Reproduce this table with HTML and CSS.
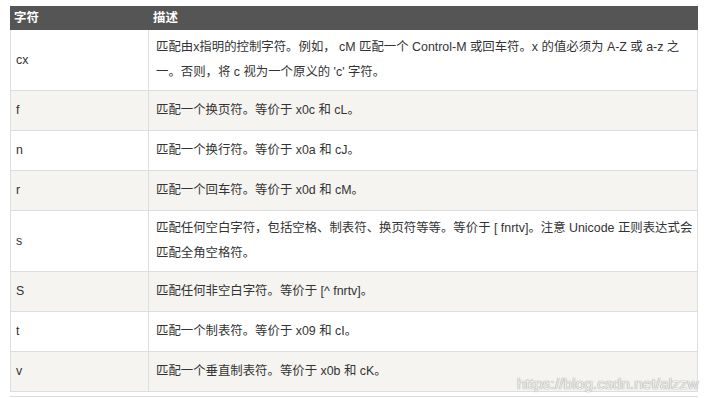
FILE: index.html
```html
<!DOCTYPE html>
<html lang="zh">
<head>
<meta charset="utf-8">
<link rel="stylesheet" href="styles.css">
</head>
<body>
<div class="page">
  <table class="ref">
    <thead>
      <tr><th class="c1">字符</th><th>描述</th></tr>
    </thead>
    <tbody>
      <tr><td class="c1">cx</td><td>匹配由x指明的控制字符。例如， cM 匹配一个 Control-M 或回车符。x 的值必须为 A-Z 或 a-z 之一。否则，将 c 视为一个原义的 'c' 字符。</td></tr>
      <tr class="alt"><td class="c1">f</td><td>匹配一个换页符。等价于 x0c 和 cL。</td></tr>
      <tr><td class="c1">n</td><td>匹配一个换行符。等价于 x0a 和 cJ。</td></tr>
      <tr class="alt"><td class="c1">r</td><td>匹配一个回车符。等价于 x0d 和 cM。</td></tr>
      <tr><td class="c1">s</td><td>匹配任何空白字符，包括空格、制表符、换页符等等。等价于 [ fnrtv]。注意 Unicode 正则表达式会匹配全角空格符。</td></tr>
      <tr class="alt"><td class="c1">S</td><td>匹配任何非空白字符。等价于 [^ fnrtv]。</td></tr>
      <tr><td class="c1">t</td><td>匹配一个制表符。等价于 x09 和 cI。</td></tr>
      <tr class="alt"><td class="c1">v</td><td>匹配一个垂直制表符。等价于 x0b 和 cK。</td></tr>
    </tbody>
  </table>
  <div class="next"></div>
  <div class="watermark">https://blog.csdn.net/alzzw</div>
</div>
</body>
</html>
```
FILE: styles.css
```css
html, body {
  margin: 0;
  padding: 0;
  background: #fff;
}
.page {
  position: relative;
  padding: 6px 15px 0 10px;
  font-family: "Liberation Sans", "Noto Sans CJK SC", sans-serif;
  font-size: 12.4px;
  color: #333;
}
.ref {
  width: 688px;
  border-collapse: collapse;
  table-layout: fixed;
}
.ref th {
  background: #555;
  color: #fff;
  font-weight: bold;
  text-align: left;
  height: 22px;
  padding: 0 4px;
  font-size: 12.4px;
  line-height: 22px;
  border: 1px solid #555;
}
.ref th.c1 {
  padding-left: 3px;
}
.ref td {
  border: 1px solid #dedede;
  height: 40px;
  box-sizing: border-box;
  padding: 5px 2px 5px 7px;
  line-height: 25px;
  vertical-align: middle;
  color: #333;
}
.ref td.c1 {
  padding-left: 5px;
}
.ref .c1 {
  width: 138px;
  box-sizing: border-box;
}
.ref tr.alt td {
  background: #f6f4f0;
}
.next {
  width: 688px;
  margin-top: 4px;
  border-top: 1px solid #ddd;
}
.watermark {
  position: absolute;
  left: 517px;
  top: 375px;
  font-family: "Liberation Sans", sans-serif;
  font-size: 15.5px;
  color: rgba(255, 255, 255, 0.85);
  text-shadow: 0 0 1px #999, 0 0 1px #999;
}
```
